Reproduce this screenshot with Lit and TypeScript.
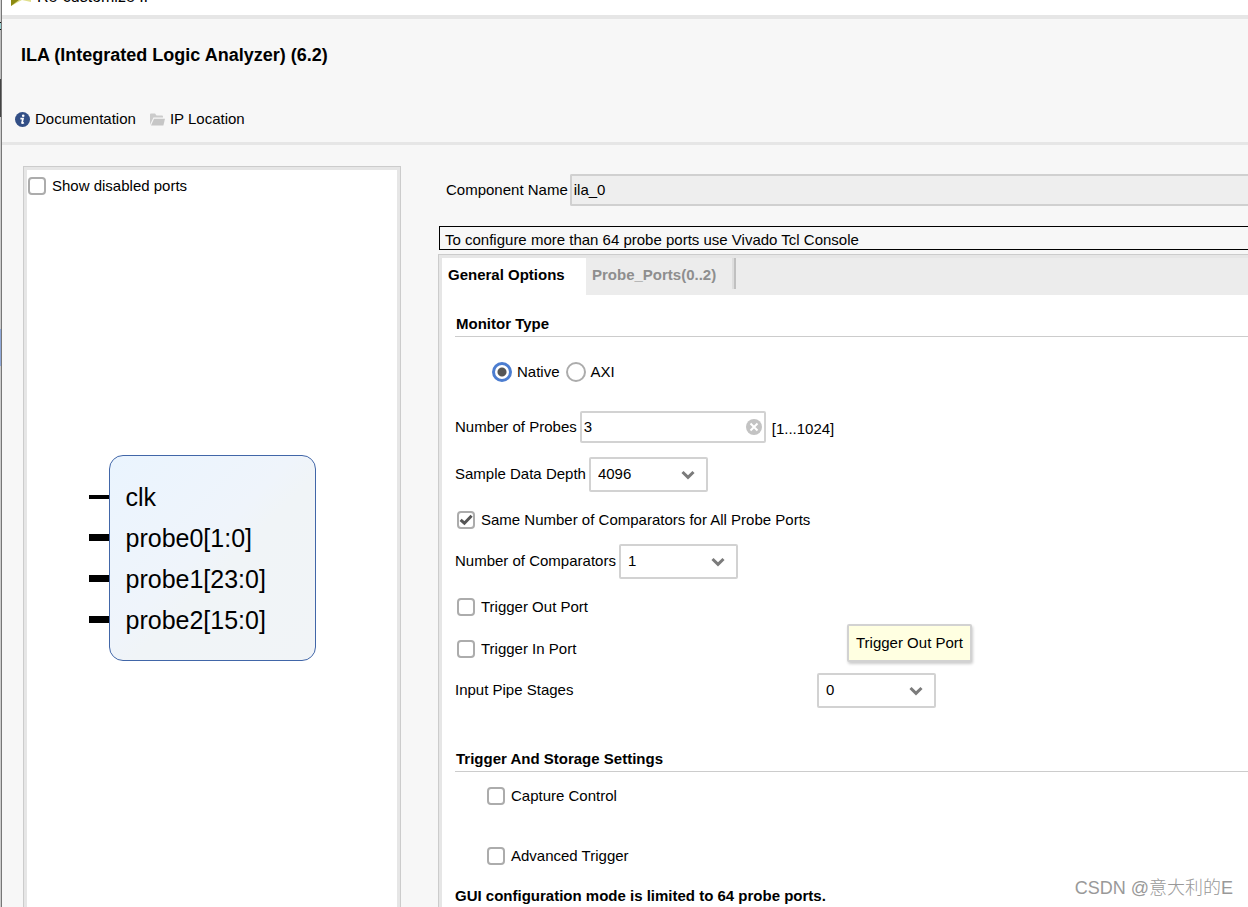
import { LitElement, html, css } from "lit";
import { customElement, property, state } from "lit/decorators.js";

const controlText = css`
  :host {
    display: block;
    font: 15px/20px "Liberation Sans", Arial, sans-serif;
    color: #000;
  }
  input,
  select,
  button {
    font: inherit;
    color: inherit;
    margin: 0;
    box-sizing: border-box;
    appearance: none;
  }
`;

@customElement("check-option")
export class CheckOption extends LitElement {
  static styles = [
    controlText,
    css`
      .option {
        display: flex;
        align-items: center;
        gap: 6px;
        width: fit-content;
      }
      .mark {
        display: grid;
        place-items: center;
      }
      .box,
      .tick {
        grid-area: 1 / 1;
        width: 18px;
        height: 18px;
      }
      .box {
        border: 2px solid #acacac;
        border-radius: 4px;
        background: #fff;
      }
      .tick {
        display: block;
        pointer-events: none;
      }
    `,
  ];

  @property() label = "";
  @property({ type: Boolean }) checked = false;

  render() {
    return html`
      <label class="option">
        <span class="mark">
          <input
            class="box"
            type="checkbox"
            .checked=${this.checked}
            @change=${(e: Event) => (this.checked = (e.target as HTMLInputElement).checked)}
          />
          ${this.checked
            ? html`<svg class="tick" viewBox="0 0 18 18" aria-hidden="true">
                <path d="M3.6 8.8 L7.4 12.2 L14.6 4.8" fill="none" stroke="#555" stroke-width="3" />
              </svg>`
            : null}
        </span>
        <span>${this.label}</span>
      </label>
    `;
  }
}

@customElement("drop-down")
export class DropDown extends LitElement {
  static styles = [
    controlText,
    css`
      .field {
        display: flex;
        align-items: center;
        gap: 3px;
      }
      .caption {
        padding-bottom: 1px;
      }
      .wide {
        display: grid;
        grid-template-columns: 362px auto;
        justify-content: start;
        gap: 0;
      }
      .combo {
        display: grid;
        align-items: center;
      }
      .select,
      .chevron {
        grid-area: 1 / 1;
      }
      .select {
        width: 119px;
        height: 35px;
        padding: 0 30px 2px 7px;
        border: 2px solid #d2d2d2;
        border-radius: 2px;
        background: #fff;
      }
      .chevron {
        justify-self: end;
        width: 14px;
        height: 10px;
        margin-right: 13px;
        pointer-events: none;
      }
    `,
  ];

  @property() label = "";
  @property({ type: Array }) options: string[] = [];
  @property({ type: Boolean }) wide = false;

  render() {
    return html`
      <div class="field ${this.wide ? "wide" : ""}">
        <label class="caption" for="value">${this.label}</label>
        <span class="combo">
          <select class="select" id="value">
            ${this.options.map((o) => html`<option>${o}</option>`)}
          </select>
          <svg class="chevron" viewBox="0 0 14 10" aria-hidden="true">
            <path d="M1.5 2 L7 7.4 L12.5 2" fill="none" stroke="#7b7b7b" stroke-width="3" />
          </svg>
        </span>
      </div>
    `;
  }
}

@customElement("ip-symbol")
export class IpSymbol extends LitElement {
  static styles = [
    controlText,
    css`
      .symbol {
        display: grid;
        grid-template-columns: 20px 207px 20px;
        justify-content: center;
      }
      .pins,
      .ports {
        display: grid;
        grid-auto-rows: 41px;
        align-items: center;
        padding: 21px 0;
      }
      .pin {
        height: 4px;
        background: #000;
      }
      .bus {
        height: 7px;
      }
      .ports {
        box-sizing: border-box;
        margin: 0;
        padding: 20px 16px;
        list-style: none;
        border: 1px solid #4166a8;
        border-radius: 14px;
        background: linear-gradient(135deg, #eaf4fe, #eff4fb 45%, #f0f4f7 55%, #f1f4f7);
        font-size: 25px;
        line-height: 30px;
      }
    `,
  ];

  @property({ type: Array }) ports: string[] = [];

  render() {
    return html`
      <div class="symbol">
        <div class="pins">
          ${this.ports.map((p) => html`<span class="pin ${p.includes("[") ? "bus" : ""}"></span>`)}
        </div>
        <ul class="ports">
          ${this.ports.map((p) => html`<li>${p}</li>`)}
        </ul>
      </div>
    `;
  }
}

@customElement("app-root")
export class AppRoot extends LitElement {
  static styles = [
    controlText,
    css`
      :host {
        position: relative;
        min-height: 100vh;
      }
      .screen {
        display: grid;
        grid-template-columns: 2px minmax(0, 1fr);
        min-height: 100vh;
      }
      .edge {
        box-sizing: border-box;
        border-right: 1px solid #777;
        background: linear-gradient(
          #d0d0d0 22px, #111 22px 23px, #9cc 23px 29px, #111 29px 30px,
          #bbb 30px 79px, #444 79px 117px, #ccc 117px 329px, #8fa8d8 329px 366px, #ccc 366px
        );
      }
      .window {
        display: flex;
        flex-direction: column;
        background: #f7f7f7;
      }
      .titlebar {
        display: flex;
        align-items: flex-end;
        gap: 6px;
        box-sizing: border-box;
        height: 19px;
        padding: 0 9px 8px;
        overflow: hidden;
        background: #fff;
        border-bottom: 4px solid #e6e6e6;
        font-size: 16px;
      }
      .logo {
        flex: none;
        width: 20px;
        height: 20px;
      }
      .header {
        padding: 26px 13px 13px;
        border-bottom: 3px solid #e6e6e6;
      }
      .title {
        margin: 0 6px;
        font-size: 18px;
        line-height: 20px;
      }
      .links {
        display: flex;
        gap: 14px;
        margin-top: 44px;
      }
      .link {
        display: flex;
        align-items: center;
        gap: 5px;
        color: inherit;
        text-decoration: none;
      }
      .icon {
        width: 15px;
        height: 15px;
      }
      .body {
        flex: 1;
        display: grid;
        grid-template-columns: 378px minmax(0, 1fr);
        gap: 37px;
        padding: 21px 0 0 21px;
      }
      .preview {
        box-sizing: border-box;
        border: 1px solid #ccc;
        border-bottom: 0;
        box-shadow: inset 3px 3px #e6e6e6, inset -3px 0 #e6e6e6;
        background: #fff;
        padding: 9px 4px 0;
      }
      .diagram {
        margin-top: 259px;
      }
      .settings {
        display: flex;
        flex-direction: column;
        min-width: 0;
      }
      .name-row {
        display: flex;
        align-items: center;
        gap: 2px;
        margin: 8px 0 20px 8px;
      }
      .name {
        flex: 1;
        min-width: 0;
        height: 32px;
        padding: 0 2px 2px;
        border: 2px solid #d0d0d0;
        border-right: 0;
        border-radius: 2px 0 0 2px;
        background: #eee;
      }
      .notice {
        margin: 0 0 4px 1px;
        padding: 3px 5px 0;
        border: 1px solid #000;
        border-right: 0;
        line-height: 19px;
      }
      .tabs-panel {
        flex: 1;
        background: #fff;
        border: 1px solid #ccc;
        border-width: 1px 0 0 1px;
        box-shadow: inset 3px 3px #e6e6e6;
        padding: 3px 0 0 3px;
      }
      .tabs {
        display: flex;
        align-items: flex-start;
        background: #ececec;
      }
      .tab {
        height: 37px;
        border: 0;
        padding: 0 6px 3px;
        background: none;
        font-weight: bold;
        color: #8e8e8e;
        text-align: left;
      }
      .tab[aria-selected="true"] {
        width: 144px;
        background: #fff;
        color: #000;
      }
      .tab[aria-selected="false"] {
        width: 146px;
      }
      .divider {
        height: 31px;
        border-left: 2px solid #dedede;
        border-right: 2px solid #c0c0c0;
      }
      .form {
        display: flex;
        flex-direction: column;
        padding: 19px 0 1px 13px;
      }
      .section {
        margin: 0;
        padding: 0 1px 2px;
        border-bottom: 1px solid #ccc;
        font-size: 15px;
        line-height: 20px;
      }
      .radios {
        display: flex;
        gap: 6px;
        margin: 25px 0 29px 37px;
      }
      .radio {
        display: flex;
        align-items: center;
        gap: 5px;
      }
      .dot {
        width: 20px;
        height: 20px;
        border: 2px solid #acacac;
        border-radius: 50%;
        background: #fff;
      }
      .dot:checked {
        border: 3px solid #4c7dd0;
        background: radial-gradient(circle, #555 4px, #fff 5px);
      }
      .probes {
        display: flex;
        align-items: center;
        gap: 3px;
      }
      .probe-field {
        display: grid;
        align-items: center;
      }
      .probe-input,
      .clear {
        grid-area: 1 / 1;
      }
      .probe-input {
        width: 186px;
        height: 32px;
        padding: 0 26px 2px 2px;
        border: 2px solid #d2d2d2;
        border-radius: 2px;
        background: #fff;
      }
      .clear {
        justify-self: end;
        width: 16px;
        height: 16px;
        margin-right: 4px;
        padding: 0;
        border: 0;
        background: none;
      }
      .clear-icon {
        display: block;
      }
      .range {
        padding: 4px 0 0 3px;
      }
      .row {
        margin-top: 14px;
      }
      .check {
        margin: 18px 0 0 2px;
      }
      .trigger-out {
        position: relative;
      }
      .tooltip {
        position: absolute;
        left: 390px;
        top: 27px;
        padding: 8px 7px;
        border: 2px solid #d2d2d2;
        border-radius: 2px;
        background: #ffffe1;
        box-shadow: 1px 2px 3px rgba(0, 0, 0, 0.2);
        white-space: nowrap;
        line-height: 18px;
      }
      .trigger-in {
        margin: 22px 0 0 2px;
      }
      .storage {
        margin-top: 41px;
      }
      .capture {
        margin: 14px 0 0 32px;
      }
      .advanced {
        margin: 40px 0 0 32px;
      }
      .limit {
        margin: 20px 0 0;
        font-weight: bold;
      }
      .credit {
        position: absolute;
        right: 15px;
        bottom: 6px;
        font: 300 18px/26px "Liberation Sans", "Noto Sans CJK SC", sans-serif;
        color: #999;
      }
    `,
  ];

  @state() private tab = 0;
  private tabNames = ["General Options", "Probe_Ports(0..2)"];
  private ports = ["clk", "probe0[1:0]", "probe1[23:0]", "probe2[15:0]"];

  render() {
    return html`
      <div class="screen">
        <div class="edge"></div>
        <div class="window">
          <div class="titlebar">
            <svg class="logo" viewBox="0 0 20 20" aria-hidden="true">
              <path d="M0 0 H20 V15 L11 13 L0 19 Z" fill="#e0df8c" />
              <path d="M0 0 H8 V13 L0 19 Z" fill="#8c8a12" />
            </svg>
            <span>Re-customize IP</span>
          </div>

          <header class="header">
            <h1 class="title">ILA (Integrated Logic Analyzer) (6.2)</h1>
            <nav class="links">
              <a class="link" href="#documentation">
                <svg class="icon" viewBox="0 0 15 15" aria-hidden="true">
                  <circle cx="7.5" cy="7.5" r="7.5" fill="#334f86" />
                  <circle cx="8.2" cy="3.7" r="1.3" fill="#fff" />
                  <path
                    d="M5.4 6.6 H8 L7 10.8 Q6.9 11.5 9 10.8"
                    fill="none" stroke="#fff" stroke-width="1.7"
                  />
                </svg>
                Documentation
              </a>
              <a class="link" href="#location">
                <svg class="icon" viewBox="0 0 15 15" aria-hidden="true">
                  <path d="M0 13 V2.5 Q0 1.5 1 1.5 H5 L6.5 3.5 H12 Q13 3.5 13 4.5 V5.5 H3.5 L0.8 11 Z" fill="#cbcbcb" />
                  <path d="M4 6.8 H15 L13.4 13.5 H1 Z" fill="#c6c6c6" />
                </svg>
                IP Location
              </a>
            </nav>
          </header>

          <main class="body">
            <section class="preview">
              <check-option label="Show disabled ports"></check-option>
              <ip-symbol class="diagram" .ports=${this.ports}></ip-symbol>
            </section>

            <section class="settings">
              <div class="name-row">
                <label for="component">Component Name</label>
                <input class="name" id="component" type="text" readonly value="ila_0" />
              </div>
              <div class="notice">To configure more than 64 probe ports use Vivado Tcl Console</div>

              <div class="tabs-panel">
                <div class="tabs" role="tablist">
                  ${this.tabNames.map(
                    (name, i) => html`<button
                      class="tab"
                      role="tab"
                      aria-selected=${this.tab === i ? "true" : "false"}
                      @click=${() => (this.tab = i)}
                    >${name}</button>`
                  )}
                  <span class="divider"></span>
                </div>

                <div class="form">
                  <h2 class="section">Monitor Type</h2>
                  <div class="radios">
                    <label class="radio">
                      <input class="dot" type="radio" name="monitor" checked />Native
                    </label>
                    <label class="radio">
                      <input class="dot" type="radio" name="monitor" />AXI
                    </label>
                  </div>

                  <div class="probes">
                    <label for="probes">Number of Probes</label>
                    <span class="probe-field">
                      <input class="probe-input" id="probes" type="text" value="3" />
                      <button class="clear" aria-label="Clear">
                        <svg class="clear-icon" viewBox="0 0 16 16" aria-hidden="true">
                          <circle cx="8" cy="8" r="8" fill="#c3c3c3" />
                          <path d="M4.5 4.5 L11.5 11.5 M11.5 4.5 L4.5 11.5" stroke="#fff" stroke-width="2" />
                        </svg>
                      </button>
                    </span>
                    <span class="range">[1...1024]</span>
                  </div>

                  <drop-down class="row" label="Sample Data Depth" .options=${["4096"]}></drop-down>
                  <check-option
                    class="check"
                    label="Same Number of Comparators for All Probe Ports"
                    checked
                  ></check-option>
                  <drop-down class="row" label="Number of Comparators" .options=${["1"]}></drop-down>
                  <div class="check trigger-out">
                    <check-option label="Trigger Out Port"></check-option>
                    <div class="tooltip" role="tooltip">Trigger Out Port</div>
                  </div>
                  <check-option class="trigger-in" label="Trigger In Port"></check-option>
                  <drop-down class="row" wide label="Input Pipe Stages" .options=${["0"]}></drop-down>

                  <h2 class="section storage">Trigger And Storage Settings</h2>
                  <check-option class="capture" label="Capture Control"></check-option>
                  <check-option class="advanced" label="Advanced Trigger"></check-option>
                  <p class="limit">GUI configuration mode is limited to 64 probe ports.</p>
                </div>
              </div>
            </section>
          </main>
        </div>
      </div>
      <div class="credit">CSDN @意大利的E</div>
    `;
  }
}
